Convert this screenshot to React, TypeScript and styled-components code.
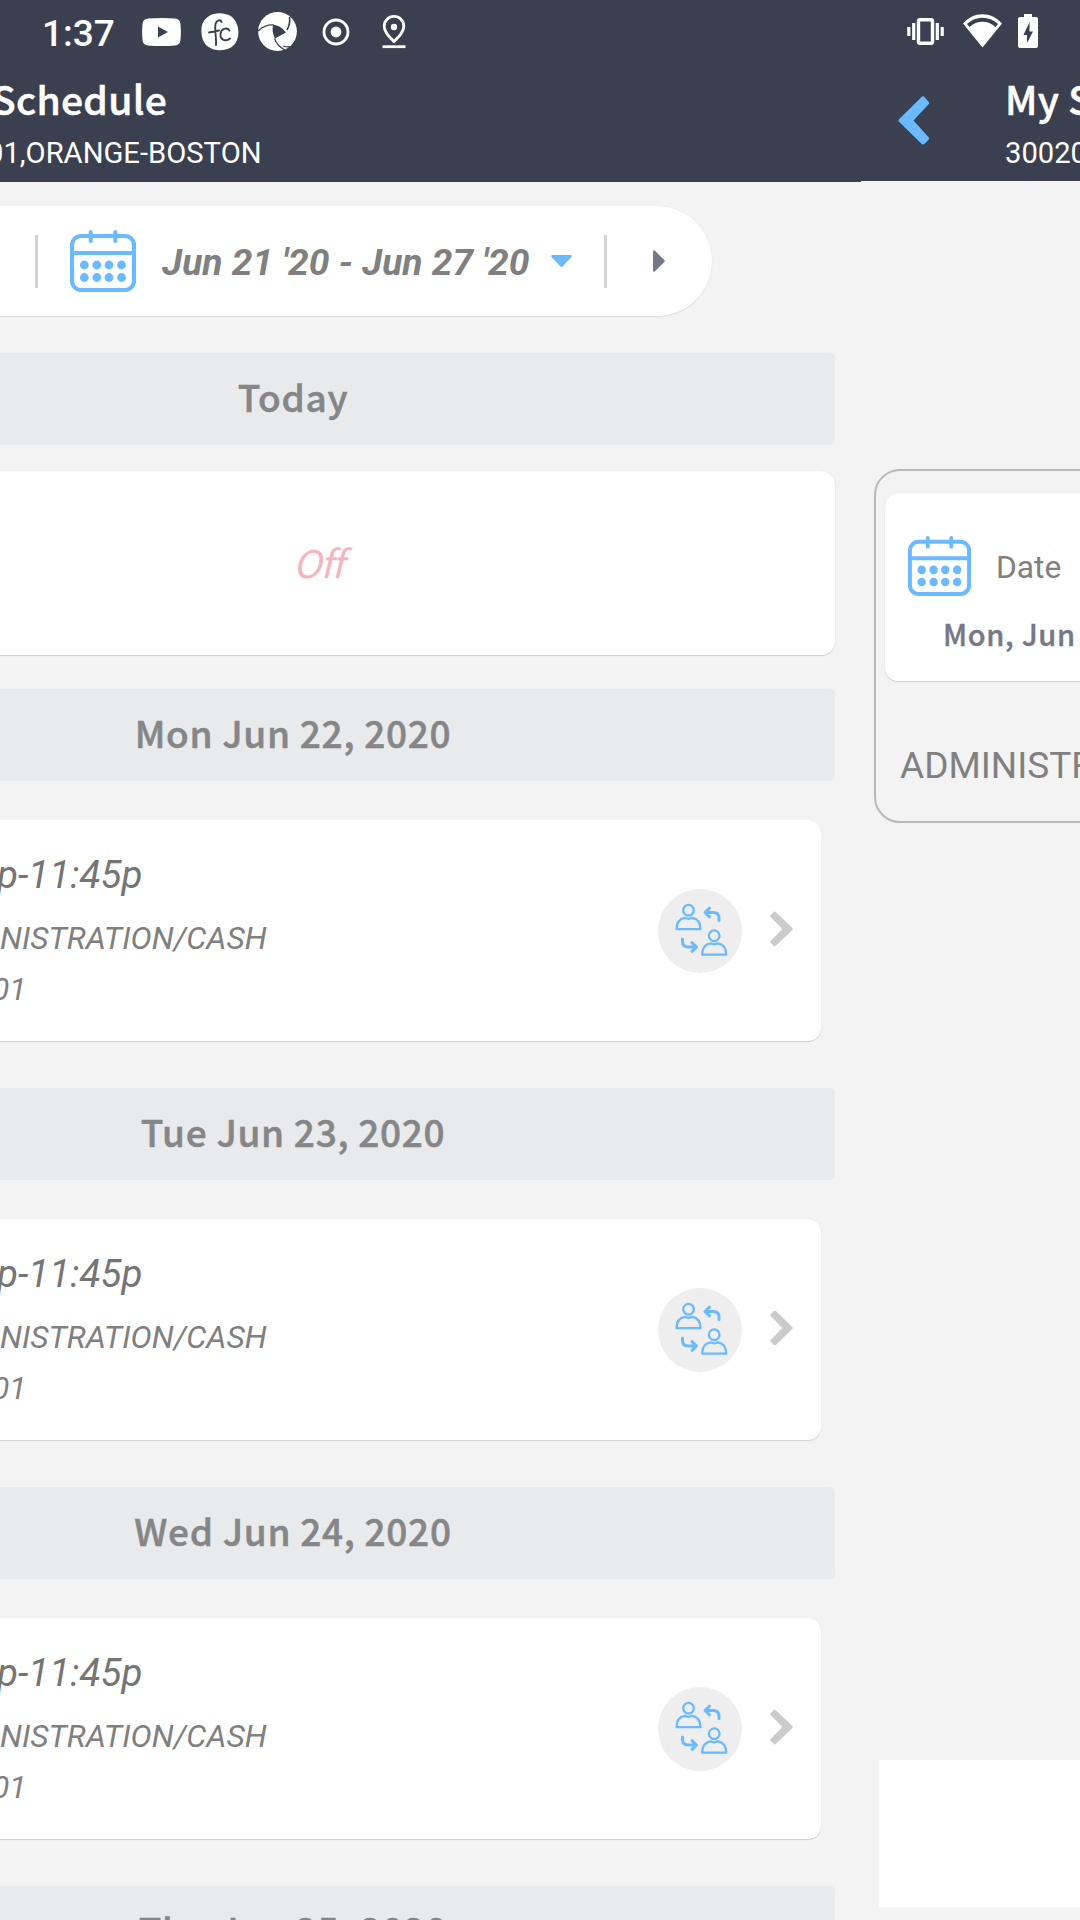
import React from "react";
import styled, { createGlobalStyle } from "styled-components";

const blue = "#6bb9ff";
const navy = "#3a404f";
const heading = '"Noto Sans CJK SC", "Noto Sans", sans-serif';

const GlobalStyle = createGlobalStyle`
  * { box-sizing: border-box; }
  body { margin: 0; background: #f3f3f3; font-family: Roboto, "Liberation Sans", sans-serif; }
  svg { display: block; flex: none; }
`;

const Screen = styled.div`
  width: 1080px;
  height: 1920px;
  overflow: hidden;
  display: flex;
  flex-direction: column;
  background: #f3f3f3;
`;

const StatusBar = styled.div`
  flex: none;
  height: 62px;
  background: ${navy};
  color: #fff;
  display: flex;
  justify-content: space-between;
  padding: 0 42px 0 42px;
`;

const StatusGroup = styled.div`
  display: flex;
  align-items: flex-start;
`;

const Clock = styled.div`
  width: 100px;
  font-size: 37px;
  font-weight: 500;
  line-height: 67px;
  height: 62px;
`;

const IconSlot = styled.div<{ $top: number; $gap?: number }>`
  padding-top: ${(p) => p.$top}px;
  margin-left: ${(p) => p.$gap ?? 0}px;
`;

const Pages = styled.div`
  flex: 1;
  min-height: 0;
  display: flex;
`;

const Page = styled.section<{ $width: number }>`
  flex: none;
  width: ${(p) => p.$width}px;
  overflow: hidden;
  display: flex;
  flex-direction: column;
`;

const Header = styled.header<{ $height: number }>`
  flex: none;
  height: ${(p) => p.$height}px;
  background: ${navy};
  color: #fff;
  display: flex;
`;

const HeaderText = styled.div`
  white-space: nowrap;
`;

const Title = styled.div<{ $indent?: number }>`
  font-family: ${heading};
  font-size: 39px;
  font-weight: 500;
  -webkit-text-stroke: 0.5px currentColor;
  letter-spacing: 0.3px;
  line-height: 52px;
  height: 64px;
  padding-top: 10px;
  margin-left: ${(p) => p.$indent ?? 0}px;
`;

const Subtitle = styled.div<{ $indent?: number }>`
  font-size: 29.2px;
  line-height: 34px;
  padding-top: 10px;
  margin-left: ${(p) => p.$indent ?? 0}px;
`;

const BackButton = styled.div`
  flex: none;
  width: 144px;
  padding: 34px 0 0 37px;
`;

const DatePicker = styled.div`
  flex: none;
  display: flex;
  align-items: center;
  width: 712px;
  height: 110px;
  margin-top: 24px;
  padding-left: 35px;
  background: #fff;
  border-radius: 0 55px 55px 0;
  box-shadow: 0 1px 1px #dedede, 0 0 1px #dcdcdc;
`;

const Divider = styled.div`
  flex: none;
  width: 3px;
  height: 53px;
  background: #d3d3d3;
`;

const CalendarSlot = styled.div`
  width: 66px;
  margin-left: 32px;
`;

const DateRange = styled.div`
  width: 389px;
  padding: 1px 0 0 26px;
  font-size: 37.2px;
  font-weight: 700;
  font-style: italic;
  line-height: 44px;
  color: #808080;
  white-space: nowrap;
`;

const CaretSlot = styled.div<{ $width: number; $left: number }>`
  width: ${(p) => p.$width}px;
  margin-left: ${(p) => p.$left}px;
`;

const DayBar = styled.div<{ $top: number }>`
  flex: none;
  width: 835px;
  height: 92px;
  margin-top: ${(p) => p.$top}px;
  padding: 0 249px 7px 0;
  display: flex;
  align-items: center;
  justify-content: center;
  background: #e9eaec;
  border-radius: 0 5px 5px 0;
  font-family: ${heading};
  font-size: 37px;
  font-weight: 500;
  -webkit-text-stroke: 0.5px currentColor;
  line-height: 54px;
  letter-spacing: 0.7px;
  color: #858688;
  white-space: nowrap;
`;

const Card = styled.div`
  flex: none;
  background: #fff;
  box-shadow: 0 1px 1px #cfcfcf, 0 0 1px #dcdcdc;
`;

const OffCard = styled(Card)`
  width: 835px;
  height: 184px;
  margin-top: 26px;
  padding: 63px 0 0 293px;
  border-radius: 0 14px 14px 0;
  font-family: ${heading};
  font-size: 38px;
  line-height: 56px;
  font-style: italic;
  font-variant-ligatures: none;
  letter-spacing: -1px;
  color: #f5b5bd;
`;

const ShiftCard = styled(Card)`
  width: 821px;
  height: 221px;
  margin-top: 39px;
  border-radius: 0 13px 13px 0;
  display: flex;
  align-items: center;
`;

const ShiftInfo = styled.div`
  width: 658px;
  height: 221px;
  padding-top: 33px;
  font-style: italic;
  white-space: nowrap;
  color: #808080;
`;

const ShiftTime = styled.div`
  margin-left: -3px;
  font-size: 38.5px;
  line-height: 44px;
  color: #757575;
`;

const ShiftLine = styled.div<{ $top: number; $shift: number }>`
  font-size: 31.7px;
  line-height: 36px;
  margin-top: ${(p) => p.$top}px;
  margin-left: ${(p) => p.$shift}px;
`;

const SwapButton = styled.div`
  width: 84px;
  height: 84px;
  border-radius: 50%;
  background: #eee;
  margin: 0 28px 0 0;
`;

const ChevronSlot = styled.div`
  padding-bottom: 3px;
`;

const DetailBox = styled.div`
  flex: none;
  width: 260px;
  height: 354px;
  margin: 288px 0 0 13px;
  padding: 22px 0 0 9px;
  border: 2px solid #b9b9b9;
  border-radius: 26px;
`;

const DateCard = styled(Card)`
  height: 188px;
  border-radius: 13px;
  padding: 43px 0 0 23px;
`;

const DateRow = styled.div`
  display: flex;
  height: 61px;
`;

const DateLabel = styled.div`
  margin-left: 25px;
  font-size: 31.7px;
  line-height: 36px;
  padding-top: 14px;
  color: #808080;
`;

const DateValue = styled.div`
  margin-left: 35px;
  padding-top: 15px;
  font-family: ${heading};
  font-size: 29px;
  font-weight: 500;
  -webkit-text-stroke: 0.4px currentColor;
  line-height: 42px;
  letter-spacing: 0.7px;
  color: #757887;
  white-space: nowrap;
`;

const Department = styled.div`
  margin: 63px 0 0 15px;
  font-size: 37px;
  line-height: 44px;
  color: #808080;
  white-space: nowrap;
`;

const Footer = styled.div`
  flex: none;
  height: 147px;
  margin: 937px 0 0 18px;
  background: #fff;
`;

const CalendarIcon = ({ width, height }: { width: number; height: number }) => (
  <svg width={width} height={height} viewBox="0 0 66 62" preserveAspectRatio="none" fill="none" stroke={blue}>
    <rect x="2" y="6" width="62" height="54" rx="9" strokeWidth="4.200" />
    <path d="M2 23H64" strokeWidth="4" />
    <path d="M20.7 2V11M45.3 2V11" strokeWidth="4" strokeLinecap="round" />
    {[35, 47.5].map((y) =>
      [14.3, 26.8, 39, 51.5].map((x) => (
        <circle key={`${x}-${y}`} cx={x} cy={y} r="4.4" fill={blue} stroke="none" />
      ))
    )}
  </svg>
);

const Person = ({ x, y }: { x: number; y: number }) => (
  <g transform={`translate(${x} ${y})`}>
    <circle cx="13" cy="6.2" r="5.3" />
    <path d="M1 25.2C1 18.5 4.500 14.600 9.500 13.800Q13 15.800 16.500 13.800C21.500 14.600 25 18.500 25 25.200Z" />
  </g>
);

const SwapIcon = () => (
  <svg width="84" height="84" viewBox="0 0 84 84" fill="none" stroke={blue} strokeWidth="2.300" strokeLinejoin="round">
    <Person x={17.5} y={15} />
    <Person x={43.2} y={40.500} />
    <g strokeWidth="3" strokeLinecap="round">
      <path d="M61 31.500V29Q61 23.500 55 23.500H48M51.500 19.200L47 23.500L51.500 27.800" />
      <path d="M24.500 50V52.500Q24.500 58 30.500 58H37.500M34 53.700L38.500 58L34 62.300" />
    </g>
  </svg>
);

const Chevron = () => (
  <svg width="24" height="36" viewBox="0 0 24 36">
    <path d="M5.800 1L22.300 17Q23.300 18 22.300 19L5.800 35Q4.800 35.800 3.800 35L.6 31.800Q-.2 30.900 .6 30L12.300 18L.6 6Q-.2 5.100 .6 4.200L3.800 1Q4.800 .2 5.800 1Z" fill="#cbcbcb" />
  </svg>
);

const BackIcon = () => (
  <svg width="32" height="49" viewBox="0 0 32 49">
    <path d="M24 .6L.8 23.500Q0 24.500 .8 25.500L24 48.200Q25 49 26 48.200L30.800 43.500Q31.600 42.500 30.800 41.500L15.500 24.500L30.800 8Q31.600 7 30.800 6L26 .6Q25 0 24 .6Z" fill={blue} />
  </svg>
);

const YoutubeIcon = () => (
  <svg width="39" height="28" viewBox="0 0 39 28">
    <path fillRule="evenodd" fill="#fff" d="M6 .6Q19.500 -.6 33 .6Q38 1 38.400 5.500Q39.400 14 38.400 22.500Q38 27 33 27.400Q19.500 28.600 6 27.400Q1 27 .6 22.500Q-.4 14 .6 5.500Q1 1 6 .6ZM16 8.500V19.500L26 14Z" />
  </svg>
);

const FcIcon = () => (
  <svg width="38" height="38" viewBox="0 0 38 38" fill="none" stroke={navy} strokeWidth="1.900" strokeLinecap="round">
    <path d="M8 3C14 -1 25 -.5 31 4C37 9 39 19 36 27C33 35 25 38 16 37C7 36 1 30 .5 20C0 12 2 7 8 3Z" fill="#fff" stroke="none" />
    <path d="M20.500 9C19.500 6 15.500 7 14.500 11C13.500 16 15.500 25 15 32M8 19.500L18 17.500M28.500 17.500C26 14 20 15.500 19.500 21C19 27 25 29 29 25.500" />
  </svg>
);

const ApertureIcon = () => (
  <svg width="39" height="39" viewBox="0 0 39 39" fill="none" stroke={navy} strokeWidth="1.300">
    <circle cx="19.500" cy="19.500" r="19.400" fill="#fff" stroke="none" />
    <path d="M15 13Q22 12.500 28 20.500L17 26.500Q13.500 20 15 13Z" fill={navy} stroke="none" />
    <path d="M0 19Q7 12.500 15.500 13" />
    <path d="M31.500 5Q32.500 12 29 18" strokeWidth="1.600" />
    <path d="M16.500 26.500Q19 34 27 38" />
    <path d="M25 34Q29 35.500 34.500 34.500" />
  </svg>
);

const RecordIcon = () => (
  <svg width="28" height="28" viewBox="0 0 28 28">
    <circle cx="14" cy="14" r="12" fill="none" stroke="#fff" strokeWidth="2.800" />
    <circle cx="14" cy="14" r="5.400" fill="#fff" />
  </svg>
);

const PinIcon = () => (
  <svg width="24" height="34" viewBox="0 0 24 34" fill="none" stroke="#fff" strokeWidth="2.800">
    <path d="M12 26.500C6 20.500 2.200 16.500 2.200 11.200A9.800 9.800 0 0 1 21.800 11.200C21.800 16.500 18 20.500 12 26.500Z" />
    <circle cx="12" cy="12" r="3.200" fill="#fff" stroke="none" />
    <path d="M.5 31.700H23.500" />
  </svg>
);

const VibrateIcon = () => (
  <svg width="37" height="27" viewBox="0 0 37 27" fill="none" stroke="#fff" strokeWidth="3.400">
    <rect x="11.500" y="1.700" width="14" height="23.600" rx="1.500" />
    <path d="M6.700 5V22M30.300 5V22M1.800 9V18M35.200 9V18" strokeWidth="3.200" />
  </svg>
);

const WifiIcon = () => (
  <svg width="39" height="34" viewBox="0 0 39 34">
    <path fillRule="evenodd" fill="#fff" d="M0 9.500C10.500 -3 28.500 -3 39 9.500L19.500 33.500ZM4 10L6.500 13C14 6 25 6 32.500 13L35 10C26 1.500 13 1.500 4 10Z" />
  </svg>
);

const BatteryIcon = () => (
  <svg width="20" height="34" viewBox="0 0 20 34">
    <path fillRule="evenodd" fill="#fff" d="M6 0H14V3H18Q20 3 20 5V32Q20 34 18 34H2Q0 34 0 32V5Q0 3 2 3H6ZM11.500 8L5.500 21H9V29L15 17.500H11.500Z" />
  </svg>
);

const DownCaret = () => (
  <svg width="21" height="13" viewBox="0 0 21 13">
    <path d="M1 0H20Q21.500 .7 20.500 2L11.500 11.500Q10.500 12.500 9.500 11.500L.5 2Q-.5 .7 1 0Z" fill={blue} />
  </svg>
);

const RightCaret = () => (
  <svg width="12" height="22" viewBox="0 0 12 22">
    <path d="M0 1Q.8 -.4 2 .8L11.300 10Q12.300 11 11.300 12L2 21.200Q.8 22.400 0 21Z" fill="#757887" />
  </svg>
);

const days = ["Mon Jun 22, 2020", "Tue Jun 23, 2020", "Wed Jun 24, 2020"];

export default function App() {
  return (
    <>
      <GlobalStyle />
      <Screen>
        <StatusBar>
          <StatusGroup>
            <Clock>1:37</Clock>
            <IconSlot $top={18}><YoutubeIcon /></IconSlot>
            <IconSlot $top={13} $gap={20}><FcIcon /></IconSlot>
            <IconSlot $top={12} $gap={19}><ApertureIcon /></IconSlot>
            <IconSlot $top={18} $gap={25}><RecordIcon /></IconSlot>
            <IconSlot $top={15} $gap={32}><PinIcon /></IconSlot>
          </StatusGroup>
          <StatusGroup>
            <IconSlot $top={18}><VibrateIcon /></IconSlot>
            <IconSlot $top={14} $gap={19}><WifiIcon /></IconSlot>
            <IconSlot $top={14} $gap={16}><BatteryIcon /></IconSlot>
          </StatusGroup>
        </StatusBar>
        <Pages>
          <Page $width={861}>
            <Header $height={120}>
              <HeaderText>
                <Title $indent={-8}>Schedule</Title>
                <Subtitle $indent={-13}>01,ORANGE-BOSTON</Subtitle>
              </HeaderText>
            </Header>
            <DatePicker>
              <Divider />
              <CalendarSlot><CalendarIcon width={66} height={62} /></CalendarSlot>
              <DateRange>Jun 21 '20 - Jun 27 '20</DateRange>
              <CaretSlot $width={21} $left={26}><DownCaret /></CaretSlot>
              <CaretSlot $width={3} $left={32}><Divider /></CaretSlot>
              <CaretSlot $width={12} $left={46}><RightCaret /></CaretSlot>
            </DatePicker>
            <DayBar $top={37}>Today</DayBar>
            <OffCard>Off</OffCard>
            {days.map((day, i) => (
              <React.Fragment key={day}>
                <DayBar $top={i === 0 ? 34 : 47}>{day}</DayBar>
                <ShiftCard>
                  <ShiftInfo>
                    <ShiftTime>p-11:45p</ShiftTime>
                    <ShiftLine $top={24} $shift={0}>NISTRATION/CASH</ShiftLine>
                    <ShiftLine $top={15} $shift={-8}>01</ShiftLine>
                  </ShiftInfo>
                  <SwapButton><SwapIcon /></SwapButton>
                  <ChevronSlot><Chevron /></ChevronSlot>
                </ShiftCard>
              </React.Fragment>
            ))}
            <DayBar $top={47}>Thu Jun 25, 2020</DayBar>
          </Page>
          <Page $width={219}>
            <Header $height={119}>
              <BackButton><BackIcon /></BackButton>
              <HeaderText>
                <Title>My S</Title>
                <Subtitle>30020</Subtitle>
              </HeaderText>
            </Header>
            <DetailBox>
              <DateCard>
                <DateRow>
                  <CalendarIcon width={63} height={60} />
                  <DateLabel>Date</DateLabel>
                </DateRow>
                <DateValue>Mon, Jun 2</DateValue>
              </DateCard>
              <Department>ADMINISTR</Department>
            </DetailBox>
            <Footer />
          </Page>
        </Pages>
      </Screen>
    </>
  );
}
